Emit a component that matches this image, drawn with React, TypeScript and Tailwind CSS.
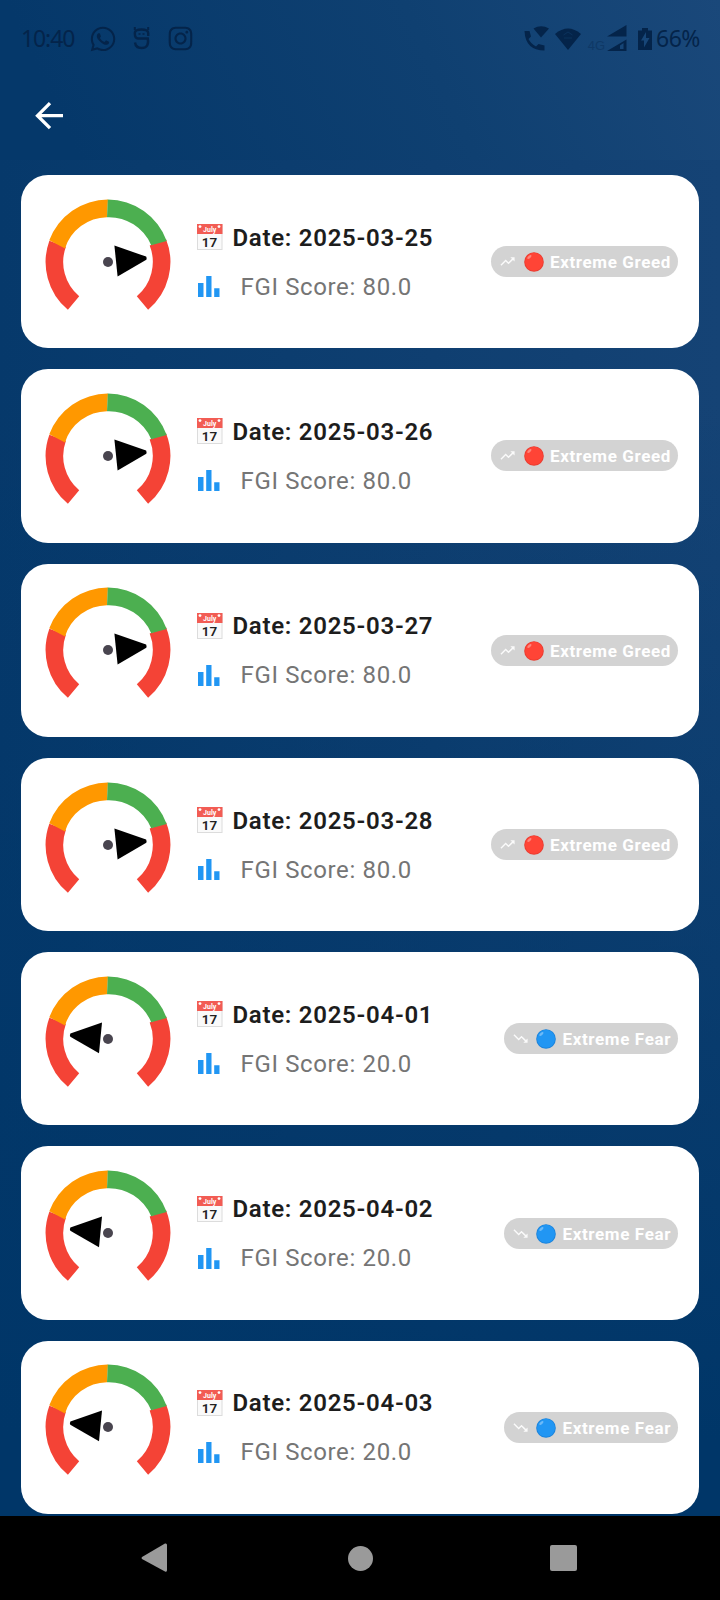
import React from "react";
import { FaWhatsapp, FaInstagram } from "react-icons/fa";
import { MdTrendingUp, MdTrendingDown } from "react-icons/md";

type Entry = { date: string; score: string; greed: boolean };

const entries: Entry[] = [
  { date: "2025-03-25", score: "80.0", greed: true },
  { date: "2025-03-26", score: "80.0", greed: true },
  { date: "2025-03-27", score: "80.0", greed: true },
  { date: "2025-03-28", score: "80.0", greed: true },
  { date: "2025-04-01", score: "20.0", greed: false },
  { date: "2025-04-02", score: "20.0", greed: false },
  { date: "2025-04-03", score: "20.0", greed: false },
];

const R = 53.6;
const point = (deg: number) => {
  const a = (deg * Math.PI) / 180;
  return `${(R * Math.cos(a)).toFixed(2)} ${(R * Math.sin(a)).toFixed(2)}`;
};
const arc = (from: number, to: number) => `M${point(from)}A${R} ${R} 0 0 1 ${point(to)}`;

function Gauge({ greed }: { greed: boolean }) {
  return (
    <svg className="h-[126px] w-[126px] shrink-0" viewBox="-63 -63 126 126">
      <g fill="none" strokeWidth="17.6">
        <path d={arc(130, 200)} stroke="#f44336" />
        <path d={arc(338.5, 410)} stroke="#f44336" />
      </g>
      <path d="M-58.700-21.700A62.400 62.400 0 0 1 0-62.400L-1-44.800A44.800 44.800 0 0 0-43-13.600Z" fill="#ff9800" />
      <path d="M-.2-62.400A62.400 62.400 0 0 1 58.700-21L43.200-16.800A46 46 0 0 0-1-44.800Z" fill="#4caf50" />
      <circle r="5" fill="#49454f" />
      {greed ? (
        <path d="M6.400-16.400 38.100-5.400Q39-3.700 38.300-2.200L9.600 14.400Z" fill="#000" />
      ) : (
        <path d="M-6-16.400-37.600-5.400Q-38.600-3.700-37.700-2.200L-9 14.200Z" fill="#000" />
      )}
    </svg>
  );
}

function Calendar() {
  return (
    <svg className="h-[26px] w-[26px]" viewBox="0 0 26 26">
      <rect x="0.5" y="0.5" width="24.5" height="25" fill="#fafafa" stroke="#dcdcdc" />
      <rect x="0" y="0" width="25.5" height="10" fill="#f25c54" />
      <circle cx="3" cy="2.6" r="1.4" fill="#fff" />
      <circle cx="22" cy="2.6" r="1.4" fill="#fff" />
      <text x="12.7" y="8" textAnchor="middle" fontSize="7" fontWeight="700" fill="#fff" fontFamily="Roboto, sans-serif">July</text>
      <text x="12.5" y="22.6" textAnchor="middle" fontSize="13.5" fontWeight="600" fill="#222" fontFamily="Roboto, sans-serif">17</text>
    </svg>
  );
}

function Ball({ greed }: { greed: boolean }) {
  return (
    <svg className="h-5 w-5" viewBox="0 0 20 20">
      <circle cx="10" cy="10" r="9.8" fill={greed ? "#e83c30" : "#1b82da"} />
      <circle cx="10" cy="9.8" r="9" fill={greed ? "#ff4436" : "#2196f3"} />
      <ellipse cx="5.4" cy="5" rx="2.6" ry="1.2" fill="#fff" opacity="0.35" transform="rotate(-42 5.4 5)" />
    </svg>
  );
}

function Card({ date, score, greed }: Entry) {
  const Trend = greed ? MdTrendingUp : MdTrendingDown;
  return (
    <div className="flex h-[173.3px] items-center rounded-[27px] bg-white pr-[21px] pl-[23.6px]">
      <Gauge greed={greed} />
      <div className="ml-[26.9px] flex flex-1 flex-col gap-[19px]">
        <div className="flex h-[30px] items-center">
          <Calendar />
          <span className="mt-[1px] ml-[9px] text-[24px] leading-[30px] font-semibold tracking-[0.72px] text-[#1d1d1d]">Date: {date}</span>
        </div>
        <div className="flex h-[30px] items-center">
          <svg className="h-[22px] w-[23px]" viewBox="0 0 23 22" fill="#2196f3">
            <path d="M1 8h5.500V22H1zM9.200 1h5.300v21H9.200zM17.200 13.300h5.300V22h-5.300z" />
          </svg>
          <span className="mt-[1px] ml-[20px] text-[24px] leading-[30px] tracking-[0.64px] text-[#757575]">FGI Score: {score}</span>
        </div>
      </div>
      <div className="flex h-[31px] items-center rounded-full bg-[#d3d3d3] pr-[7px] pl-[8px] text-white">
        <Trend className="h-[17px] w-[17px] opacity-90" />
        <span className="mt-[1px] ml-[7.5px]"><Ball greed={greed} /></span>
        <span className="mt-[1px] ml-[6.5px] text-[17px] leading-[20px] font-bold tracking-[0.62px]">{greed ? "Extreme Greed" : "Extreme Fear"}</span>
      </div>
    </div>
  );
}

function StatusBar() {
  return (
    <div className="flex h-[77px] items-center pr-[20px] pl-[21px] text-[#04244a]">
      <span className="w-[54px] font-['Noto_Sans',sans-serif] text-[23px] tracking-[-1.1px] whitespace-nowrap">10:40</span>
      <FaWhatsapp className="ml-[14px] h-[28px] w-[28px]" />
      <svg className="ml-[16px] h-[23px] w-[17px]" viewBox="0 0 17 23" fill="none" stroke="currentColor">
        <path d="M1.800 0V3M15.200 0V3" strokeWidth="2" />
        <path d="M15.200 9V6Q15 2.500 8.500 2.500T1.800 6Q1.800 11.500 5 11.500H14.800Q16.500 21 8.500 21 2.800 21 2 15.500" strokeWidth="2.400" />
        <path d="M5.500 7h2M9.500 7h2" strokeWidth="1.500" />
      </svg>
      <FaInstagram className="ml-[17px] h-[27px] w-[27px]" />
      <div className="flex-1" />
      <svg className="h-[25px] w-[25px]" viewBox="0 0 25 25" fill="currentColor">
        <path d="M9.500 2.500Q17-2 25 2.500L17 11.500Z" />
        <path d="M.5 5H5.500L7 10.500 4.500 13Q7 18 12 20.500L14.500 18 20.500 19.500V24.500Q1.500 24.500.5 5Z" />
      </svg>
      <svg className="ml-[6px] h-[22px] w-[26px]" viewBox="0 0 26 22" fill="currentColor">
        <path d="M0 6Q13-5 26 6L13 22Z" />
        <path d="M8.500 7 13 4l4.500 3M9 10h8" stroke="#123f6d" strokeWidth="1" fill="none" opacity=".5" />
      </svg>
      <span className="ml-[7px] self-end pb-[25px] font-['Liberation_Sans',sans-serif] text-[13px] leading-[12px] opacity-35">4G</span>
      <svg className="ml-[2px] h-[27px] w-[20px]" viewBox="0 0 20 27" fill="currentColor">
        <path d="M0 11.500 19.500 0v11.500Z" />
        <path d="M0 26 19.500 14.500V26ZM13 20.500V24H16.500V18Z" fillRule="evenodd" />
      </svg>
      <svg className="ml-[11px] h-[22px] w-[14px]" viewBox="0 0 14 22">
        <path d="M4 0h6v2.500h4V22H0V2.500h4Z" fill="currentColor" />
        <path d="M8 4 3 12.500H6V19.500L11.500 10H8Z" fill="#174678" />
      </svg>
      <span className="ml-[4px] font-['Noto_Sans',sans-serif] text-[23px] tracking-[-0.5px]">66%</span>
    </div>
  );
}

export default function App() {
  return (
    <div className="flex h-[1600px] w-[720px] flex-col overflow-hidden bg-[linear-gradient(to_bottom,transparent_25%,#003668_90%),linear-gradient(to_right,#06396b,#154375)] font-[Roboto,sans-serif]">
      <div className="h-[160px] shrink-0 bg-[linear-gradient(245deg,#1a487a,#0f4071_40%,#05386a_90%)]">
        <StatusBar />
        <svg className="mt-[20px] ml-[31px] h-[37px] w-[37px]" viewBox="0 0 37 37" fill="none" stroke="#fff" strokeWidth="3.300">
          <path d="M32 18.700H7M19 6.200 6.500 18.700 19 31.200" />
        </svg>
      </div>
      <div className="flex flex-1 flex-col gap-[21px] px-[21px] pt-[15px]">
        {entries.map((e) => <Card key={e.date} {...e} />)}
      </div>
      <div className="grid h-[84px] shrink-0 grid-cols-[308px_104px_308px] items-center bg-black">
        <svg className="ml-[141px] h-[30px] w-[27px]" viewBox="0 0 27 30" fill="#9a9a9a"><path d="M1 14 24 .5Q26 0 26 2V27Q26 29.500 24 28.500L1 16Q0 15 1 14Z" /></svg>
        <div className="h-[25px] w-[25px] justify-self-center rounded-full bg-[#9a9a9a]" />
        <div className="ml-[138px] h-[26px] w-[27px] rounded-[2px] bg-[#9a9a9a]" />
      </div>
    </div>
  );
}
